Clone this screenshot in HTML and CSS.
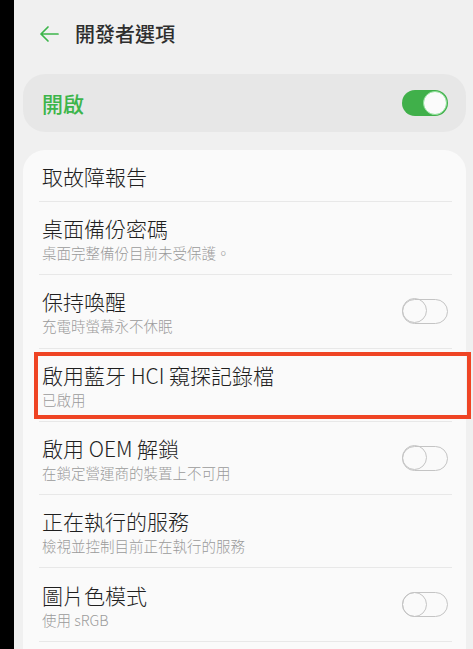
FILE: index.html
```html
<!DOCTYPE html>
<html lang="zh-Hant">
<head>
<meta charset="utf-8">
<link rel="stylesheet" href="styles.css">
</head>
<body>
<div class="screen">
  <header class="header">
    <svg class="back" width="22" height="18" viewBox="0 0 22 18">
      <path d="M20 9H3M10 2L3 9l7 7" fill="none" stroke="#3db54b" stroke-width="1.7" stroke-linecap="round" stroke-linejoin="round"/>
    </svg>
    <h1 class="title">開發者選項</h1>
  </header>

  <section class="master">
    <span class="master-label">開啟</span>
    <span class="toggle on"><span class="knob"></span></span>
  </section>

  <section class="list">
    <div class="row single">
      <div class="texts"><div class="t">取故障報告</div></div>
    </div>
    <div class="row">
      <div class="texts"><div class="t">桌面備份密碼</div><div class="s">桌面完整備份目前未受保護。</div></div>
    </div>
    <div class="row">
      <div class="texts"><div class="t">保持喚醒</div><div class="s">充電時螢幕永不休眠</div></div>
      <span class="toggle"><span class="knob"></span></span>
    </div>
    <div class="row highlighted">
      <div class="texts"><div class="t">啟用藍牙 HCI 窺探記錄檔</div><div class="s">已啟用</div></div>
      <span class="mark"></span>
    </div>
    <div class="row">
      <div class="texts"><div class="t">啟用 OEM 解鎖</div><div class="s">在鎖定營運商的裝置上不可用</div></div>
      <span class="toggle"><span class="knob"></span></span>
    </div>
    <div class="row">
      <div class="texts"><div class="t">正在執行的服務</div><div class="s">檢視並控制目前正在執行的服務</div></div>
    </div>
    <div class="row">
      <div class="texts"><div class="t">圖片色模式</div><div class="s">使用 sRGB</div></div>
      <span class="toggle"><span class="knob"></span></span>
    </div>
  </section>
</div>
</body>
</html>
```

FILE: styles.css
```css
html, body {
  margin: 0;
  padding: 0;
  overflow: hidden;
  height: 100%;
}
body {
  background: #000;
  font-family: "Noto Sans CJK TC", "Noto Sans", sans-serif;
}
.screen {
  margin-left: 14px;
  height: 100%;
  box-sizing: border-box;
  background: #f0f0f0;
  padding: 0 7px 0 9px;
  display: flex;
  flex-direction: column;
}
.header {
  height: 74px;
  flex: none;
  display: flex;
  align-items: center;
  padding-left: 15px;
  gap: 15px;
  box-sizing: border-box;
  padding-bottom: 6px;
}
.back { display: block; }
.title {
  margin: 0;
  font-size: 20px;
  font-weight: 500;
  color: #2e2e2e;
  line-height: 28px;
}
.master {
  height: 58px;
  flex: none;
  background: #e7e7e7;
  border-radius: 22px;
  display: flex;
  align-items: center;
  justify-content: space-between;
  padding: 0 18px 0 19px;
}
.master-label {
  font-size: 21px;
  font-weight: 500;
  color: #3db54b;
  line-height: 28px;
}
.toggle {
  position: relative;
  width: 46px;
  height: 25px;
  box-sizing: border-box;
  border-radius: 13px;
  border: 1.5px solid #c4c4c4;
  display: block;
  flex: none;
}
.toggle .knob {
  position: absolute;
  top: -1.5px;
  left: -1.5px;
  width: 25px;
  height: 25px;
  box-sizing: border-box;
  border-radius: 50%;
  border: 1.5px solid #c4c4c4;
  background: transparent;
}
.toggle.on {
  height: 26px;
  background: #40b04a;
  border: none;
}
.toggle.on .knob {
  top: 1px;
  left: auto;
  right: 1px;
  width: 24px;
  height: 24px;
  background: #fbfbfb;
  border: 1px solid #8fe09a;
}
.list {
  margin-top: 18px;
  flex: 1;
  min-height: 0;
  background: #fafafa;
  border-radius: 22px 22px 0 0;
  padding: 0 14px 0 16px;
}
.row {
  position: relative;
  display: flex;
  align-items: center;
  justify-content: space-between;
  height: 73.3px;
  box-sizing: border-box;
  border-bottom: 1px solid #e8e8e8;
  padding: 0 4px 0 3px;
}
.row.single { height: 52px; }
.texts { display: flex; flex-direction: column; }
.t {
  font-size: 21px;
  font-weight: 300;
  line-height: 28px;
  color: #1f1f1f;
}
.s {
  font-size: 14.5px;
  font-weight: 300;
  line-height: 22px;
  color: #9a9a9a;
  margin-bottom: -2px;
}
.mark {
  position: absolute;
  left: -5px;
  right: -19px;
  top: 3px;
  bottom: 2px;
  border: 4px solid #ef4424;
  pointer-events: none;
}
```
